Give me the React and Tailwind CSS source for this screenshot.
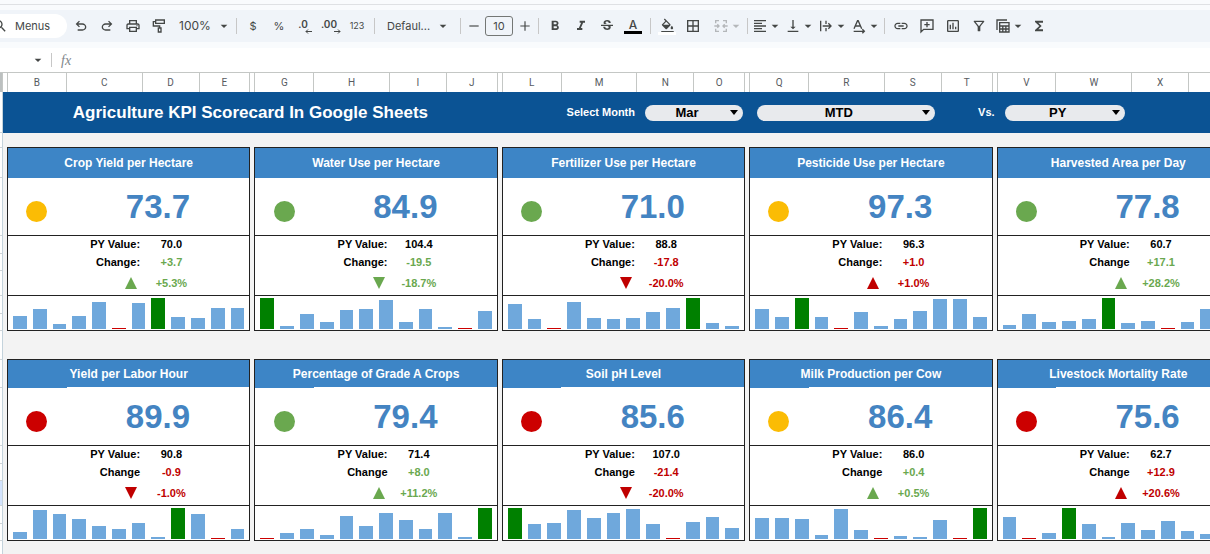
import { useState } from 'react';
import clsx from 'clsx';
import {
    MdArrowDropDown,
    MdBorderAll,
    MdFormatAlignLeft,
    MdFormatBold,
    MdFormatColorFill,
    MdFormatItalic,
    MdFunctions,
    MdLink,
    MdOutlineFilterAlt,
    MdOutlineInsertChart,
    MdOutlinePrint,
    MdSearch,
    MdStrikethroughS,
    MdVerticalAlignBottom,
} from 'react-icons/md';

const COLUMN_GROUPS = [
    ['B', 'C', 'D', 'E'],
    ['G', 'H', 'I', 'J'],
    ['L', 'M', 'N', 'O'],
    ['Q', 'R', 'S', 'T'],
    ['V', 'W', 'X'],
];

// Heights of the sheet rows, top to bottom
const ROW_HEIGHTS = [41, 15, 30, 58, 18, 17, 25, 18, 17, 29, 28, 58, 18, 17, 25, 18, 17];

// Bar heights go from 0 to 94, the lowest month is drawn as a thin red line
const TOP_CARDS = [
    { title: 'Crop Yield per Hectare', value: '73.7', status: 'yellow', py: '70.0', label: 'Change:', change: '+3.7', pct: '+5.3%', up: true, good: true, bars: [38, 60, 14, 38, 83, 0, 79, 94, 36, 33, 63, 63] },
    { title: 'Water Use per Hectare', value: '84.9', status: 'green', py: '104.4', label: 'Change:', change: '-19.5', pct: '-18.7%', up: false, good: true, bars: [94, 9, 46, 22, 59, 62, 88, 22, 61, 7, 0, 54] },
    { title: 'Fertilizer Use per Hectare', value: '71.0', status: 'green', py: '88.8', label: 'Change:', change: '-17.8', pct: '-20.0%', up: false, good: false, bars: [75, 30, 0, 83, 33, 31, 33, 51, 63, 94, 18, 9] },
    { title: 'Pesticide Use per Hectare', value: '97.3', status: 'yellow', py: '96.3', label: 'Change:', change: '+1.0', pct: '+1.0%', up: true, good: false, bars: [61, 36, 94, 36, 0, 51, 9, 29, 54, 90, 92, 36] },
    { title: 'Harvested Area per Day', value: '77.8', status: 'green', py: '60.7', label: 'Change', change: '+17.1', pct: '+28.2%', up: true, good: true, bars: [12, 45, 22, 24, 29, 94, 18, 24, 0, 22, 61, 40] },
];

const BOTTOM_CARDS = [
    { title: 'Yield per Labor Hour', value: '89.9', status: 'red', py: '90.8', label: 'Change', change: '-0.9', pct: '-1.0%', up: false, good: false, bars: [20, 88, 75, 62, 38, 29, 49, 7, 94, 75, 0, 29] },
    { title: 'Percentage of Grade A Crops', value: '79.4', status: 'green', py: '71.4', label: 'Change', change: '+8.0', pct: '+11.2%', up: true, good: true, bars: [0, 18, 29, 12, 71, 38, 80, 57, 29, 79, 7, 94] },
    { title: 'Soil pH Level', value: '85.6', status: 'red', py: '107.0', label: 'Change', change: '-21.4', pct: '-20.0%', up: false, good: false, bars: [94, 46, 49, 87, 64, 80, 92, 46, 0, 53, 67, 32] },
    { title: 'Milk Production per Cow', value: '86.4', status: 'yellow', py: '86.0', label: 'Change', change: '+0.4', pct: '+0.5%', up: true, good: true, bars: [64, 64, 60, 12, 92, 27, 0, 9, 7, 57, 0, 94] },
    { title: 'Livestock Mortality Rate', value: '75.6', status: 'red', py: '62.7', label: 'Change', change: '+12.9', pct: '+20.6%', up: true, good: false, bars: [67, 0, 18, 94, 45, 7, 49, 27, 55, 23, 15, 40] },
];

const STATUS = {
    yellow: 'bg-[#fbbc04]',
    green: 'bg-[#6aa84f]',
    red: 'bg-[#cc0000]',
};

function Icon({ d, size = 16, children }) {
    return (
        <svg width={size} height={size} viewBox="0 0 24 24" fill="currentColor" aria-hidden="true">
            {d && <path d={d} />}
            {children}
        </svg>
    );
}

function ToolButton({ label, className, children }) {
    return (
        <button
            type="button"
            aria-label={label}
            className={clsx('flex h-6 shrink-0 items-center justify-center', className || 'w-[26px]')}
        >
            {children}
        </button>
    );
}

function Caret() {
    return <MdArrowDropDown className="-mx-0.5 size-4 shrink-0" />;
}

function DropButton({ label, className, children }) {
    return (
        <button type="button" aria-label={label} className={clsx('flex h-6 w-[30px] shrink-0 items-center', className)}>
            <span className="flex w-[18px] justify-center">{children}</span>
            <Caret />
        </button>
    );
}

function Divider() {
    return (
        <span className="flex w-2 shrink-0 justify-center">
            <span className="h-4 w-px bg-[#c7c7c7]" />
        </span>
    );
}

function Decimal({ text, right }) {
    return (
        <span className="flex flex-col items-end pt-0.5">
            <span className="pr-1 text-[10px] leading-[9px] font-semibold">{text}</span>
            <svg width="7" height="5" viewBox="0 0 7 5" fill="none" stroke="currentColor" aria-hidden="true">
                {right ? <path d="M0 2.5h6M4 .5l2 2-2 2" /> : <path d="M7 2.5H1M3 .5l-2 2 2 2" />}
            </svg>
        </span>
    );
}

function Toolbar() {
    const [fontSize, setFontSize] = useState('10');

    return (
        <div className="flex h-8 items-center overflow-hidden bg-[#f0f4f9] text-[#444746]">
            <button type="button" className="mr-px flex h-6 w-[67px] shrink-0 items-center rounded-r-full bg-white">
                <MdSearch className="-ml-2 size-4 shrink-0" />
                <span className="ml-[7px] text-[11px]">Menus</span>
            </button>
            <ToolButton label="Undo">
                <Icon d="M7 19v-2h7.1q1.575 0 2.738-1T18 13.5q0-1.5-1.163-2.5T14.1 10H7.8l2.6 2.6L9 14 4 9l5-5 1.4 1.4L7.8 8h6.3q2.425 0 4.163 1.575T20 13.5q0 2.35-1.737 3.925T14.1 19H7Z" />
            </ToolButton>
            <ToolButton label="Redo">
                <Icon d="M17 19v-2H9.9q-1.575 0-2.738-1T6 13.5Q6 12 7.163 11T9.9 10h6.3l-2.6 2.6L15 14l5-5-5-5-1.4 1.4L16.2 8H9.9Q7.475 8 5.737 9.575T4 13.5q0 2.35 1.737 3.925T9.9 19H17Z" />
            </ToolButton>
            <ToolButton label="Print">
                <MdOutlinePrint className="size-4" />
            </ToolButton>
            <ToolButton label="Paint format">
                <Icon>
                    <g fill="none" stroke="currentColor" strokeWidth="2">
                        <path d="M7 3h13v5H7zM7 5.500H3.500V12H13v3" />
                        <path d="M11 15h4v6h-4z" />
                    </g>
                </Icon>
            </ToolButton>
            <button type="button" className="flex h-6 w-[60px] shrink-0 items-center justify-between pr-0.5 pl-[7px] text-[12px]">
                100%
                <Caret />
            </button>
            <Divider />
            <ToolButton label="Format as currency">
                <span className="text-[11px]">$</span>
            </ToolButton>
            <ToolButton label="Format as percent">
                <span className="text-[11px]">%</span>
            </ToolButton>
            <ToolButton label="Decrease decimal places">
                <Decimal text=".0" />
            </ToolButton>
            <ToolButton label="Increase decimal places">
                <Decimal text=".00" right />
            </ToolButton>
            <ToolButton label="More formats">
                <span className="text-[9px]">123</span>
            </ToolButton>
            <Divider />
            <button type="button" className="flex h-6 w-[78px] shrink-0 items-center justify-between pr-[7px] pl-[9px] text-[11px]">
                Defaul...
                <Caret />
            </button>
            <Divider />
            <ToolButton label="Decrease font size" className="w-[19px]">
                <Icon size={14} d="M4 11h16v2H4z" />
            </ToolButton>
            <input
                aria-label="Font size"
                value={fontSize}
                onChange={(e) => setFontSize(e.target.value)}
                className="mx-0.5 h-5 w-7 shrink-0 rounded-[3px] border border-[#747775] text-center text-[11px]"
            />
            <ToolButton label="Increase font size" className="w-[19px]">
                <Icon size={14} d="M4 11h7V4h2v7h7v2h-7v7h-2v-7H4z" />
            </ToolButton>
            <Divider />
            <ToolButton label="Bold">
                <MdFormatBold className="size-4" />
            </ToolButton>
            <ToolButton label="Italic">
                <MdFormatItalic className="size-4" />
            </ToolButton>
            <ToolButton label="Strikethrough">
                <MdStrikethroughS className="size-4" />
            </ToolButton>
            <ToolButton label="Text color">
                <span className="flex flex-col items-center">
                    <span className="text-[12px] leading-3 font-medium">A</span>
                    <span className="h-[3px] w-[18px] bg-black" />
                </span>
            </ToolButton>
            <Divider />
            <ToolButton label="Fill color">
                <span className="flex flex-col items-center">
                    <MdFormatColorFill className="size-[15px]" viewBox="0 0 24 19" />
                    <span className="h-[3px] w-[18px] bg-white" />
                </span>
            </ToolButton>
            <ToolButton label="Borders">
                <MdBorderAll className="size-4" />
            </ToolButton>
            <DropButton label="Merge cells" className="mr-px ml-1.5 text-[#b4b7ba]">
                <Icon>
                    <path
                        d="M9 4H4v4M15 4h5v4M9 20H4v-4M15 20h5v-4M2 12h7M22 12h-7M6.500 9.500 9 12l-2.500 2.500M17.500 9.500 15 12l2.500 2.500"
                        fill="none"
                        stroke="currentColor"
                        strokeWidth="2"
                    />
                </Icon>
            </DropButton>
            <Divider />
            <div className="flex gap-[3px]">
                <DropButton label="Horizontal align">
                    <MdFormatAlignLeft className="size-4" />
                </DropButton>
                <DropButton label="Vertical align">
                    <MdVerticalAlignBottom className="size-4" />
                </DropButton>
                <DropButton label="Text wrapping">
                    <Icon>
                        <path
                            d="M4 4v16M12 4v5M12 15v5M7 12h12M15.500 8l4 4-4 4"
                            fill="none"
                            stroke="currentColor"
                            strokeWidth="2"
                        />
                    </Icon>
                </DropButton>
                <DropButton label="Text rotation">
                    <Icon>
                        <path
                            d="M4.500 16 9.800 4h1L16 16M6.500 12h7.500M4 20h16M17 17l3 3-3 3"
                            fill="none"
                            stroke="currentColor"
                            strokeWidth="2"
                        />
                    </Icon>
                </DropButton>
            </div>
            <Divider />
            <ToolButton label="Insert link">
                <MdLink className="size-4" />
            </ToolButton>
            <ToolButton label="Insert comment">
                <Icon>
                    <path d="M3 21V3h18v14H7z M12 6v8 M8 10h8" fill="none" stroke="currentColor" strokeWidth="2" />
                </Icon>
            </ToolButton>
            <ToolButton label="Insert chart">
                <MdOutlineInsertChart className="size-4" />
            </ToolButton>
            <ToolButton label="Create a filter">
                <MdOutlineFilterAlt className="size-4" />
            </ToolButton>
            <DropButton label="Filter views" className="ml-0.5">
                <Icon>
                    <path
                        d="M7 7h14v14H7zM7 12h14M7 16.500h14M11.700 12v9M16.300 12v9M3 18V3h15"
                        fill="none"
                        stroke="currentColor"
                        strokeWidth="2"
                    />
                </Icon>
            </DropButton>
            <ToolButton label="Functions" className="ml-0.5 w-[26px]">
                <MdFunctions className="size-4" />
            </ToolButton>
        </div>
    );
}

function FormulaBar() {
    return (
        <div className="flex h-6 items-center bg-white text-[#444746]">
            <button type="button" aria-label="Name box" className="flex h-6 w-[51px] items-center justify-end pr-[7px]">
                <Caret />
            </button>
            <span className="h-3.5 w-px bg-[#c7c7c7]" />
            <label htmlFor="formula" className="w-7 pl-[9px] font-['Liberation_Serif',serif] text-[14px] text-[#80868b] italic">
                fx
            </label>
            <input id="formula" className="min-w-0 flex-1 outline-none" />
        </div>
    );
}

function PillSelect({ id, label, options }) {
    return (
        <div className="relative">
            <select
                id={id}
                aria-label={label}
                className="block h-4 w-full appearance-none rounded-full bg-[#e8eaed] pr-[14px] text-center text-[13px] leading-4 font-bold text-black [text-align-last:center]"
            >
                {options.map((option) => (
                    <option key={option}>{option}</option>
                ))}
            </select>
            <svg
                className="pointer-events-none absolute top-[5px] right-[5px]"
                width="8"
                height="5"
                viewBox="0 0 8 5"
                aria-hidden="true"
            >
                <path d="M0 0h8L4 5z" />
            </svg>
        </div>
    );
}

function Banner() {
    return (
        <div className="bg-[#0b5394] text-white">
            <div className="ml-1 grid h-[41px] min-w-[1233px] grid-cols-5 items-center gap-1">
                <h1 className="col-span-2 pr-1 text-center text-[17px] font-bold whitespace-nowrap">
                    Agriculture KPI Scorecard In Google Sheets
                </h1>
                <div className="grid grid-cols-[59fr_76fr_57fr_51fr] items-center">
                    <label htmlFor="month" className="col-span-2 pr-0.5 text-right text-[11px] font-bold">
                        Select Month
                    </label>
                    <div className="col-span-2 pr-0.5 pl-2">
                        <PillSelect id="month" options={['Mar', 'Apr', 'May']} />
                    </div>
                </div>
                <div className="grid grid-cols-[59fr_76fr_57fr_51fr] items-center">
                    <div className="col-span-3 pr-[7px] pl-2">
                        <PillSelect id="period" label="Period" options={['MTD', 'YTD']} />
                    </div>
                    <label htmlFor="compare" className="-mr-0.5 text-right text-[11px] font-bold">
                        Vs.
                    </label>
                </div>
                <div className="grid grid-cols-[59fr_76fr_57fr_51fr] items-center">
                    <div className="col-span-2 pr-[7px] pl-2">
                        <PillSelect id="compare" options={['PY', 'Target']} />
                    </div>
                </div>
            </div>
        </div>
    );
}

function BarStrip({ bars }) {
    return (
        <div className="flex h-[34px] items-end gap-[6px] px-[5px] pb-px">
            {bars.map((bar, i) => (
                <div key={i} className="flex h-[31px] flex-1 items-end">
                    <div
                        className={clsx('min-h-px w-full', bar === 94 ? 'bg-[#008000]' : bar === 0 ? 'bg-[#cc0000]' : 'bg-[#6fa8dc]')}
                        style={{ height: `${(bar / 94) * 100}%` }}
                    />
                </div>
            ))}
        </div>
    );
}

function KpiCard({ card, compact }) {
    const tone = card.good ? 'text-[#6aa84f]' : 'text-[#c00000]';

    return (
        <section className="border border-[#222] bg-white text-[11px] font-bold text-black">
            <h2
                className={clsx(
                    'flex items-center justify-center bg-[#3d85c6] text-[12px] text-white',
                    compact ? 'h-[27px]' : 'h-[30px]'
                )}
            >
                {card.title}
            </h2>
            <div className={clsx('grid grid-cols-[59fr_76fr_57fr_51fr] border-b border-[#222]', compact ? 'h-[59px]' : 'h-[58px]')}>
                <div className={clsx('flex items-end justify-center pr-px pb-[13px]', compact && 'border-t border-[#3d85c6]')}>
                    <span className={clsx('size-[21px] rounded-full', STATUS[card.status])} />
                </div>
                <div className="col-span-3 flex items-center justify-center text-[33px] leading-none text-[#4484c2]">
                    {card.value}
                </div>
            </div>
            <div className="grid grid-cols-[59fr_76fr_57fr_51fr] grid-rows-[17px_18px_24px] items-center border-b border-[#222]">
                <span className="col-span-2 pr-0.5 text-right">PY Value:</span>
                <span className="pl-0.5 text-center">{card.py}</span>
                <span />
                <span className="col-span-2 pr-0.5 text-right">{card.label}</span>
                <span className={clsx('pl-0.5 text-center', tone)}>{card.change}</span>
                <span />
                <span className={clsx('col-span-2 flex justify-end pr-[5px]', tone)}>
                    <svg width="12" height="12" viewBox="0 0 12 12" fill="currentColor" aria-hidden="true">
                        <path d={card.up ? 'M6 0l6 12H0z' : 'M0 0h12L6 12z'} />
                    </svg>
                </span>
                <span className={clsx('pl-0.5 text-center', tone)}>{card.pct}</span>
            </div>
            <BarStrip bars={card.bars} />
        </section>
    );
}

export default function App() {
    return (
        <div className="min-h-screen overflow-hidden bg-[#f9fbfd] font-[Inter,sans-serif]">
            <div className="mb-[5px] h-[5px] border-b border-[#dfe1e4]" />
            <Toolbar />
            <div className="h-1.5" />
            <FormulaBar />

            {/* Column letters */}
            <div className="flex h-5 border-t border-[#c4c7c5] bg-white">
                <div className="w-[3px] shrink-0 border-r border-[#c4c7c5] bg-[#bcc0c0]" />
                <div className="ml-1 grid min-w-[1233px] flex-1 grid-cols-5 gap-1">
                    {COLUMN_GROUPS.map((group) => (
                        <div
                            key={group[0]}
                            className="grid grid-cols-[59fr_76fr_57fr_51fr] border-l border-[#c4c7c5] font-[Roboto,sans-serif] text-[10px] text-[#575b5f]"
                        >
                            {group.map((letter) => (
                                <span key={letter} className="flex items-center justify-center border-r border-[#c4c7c5]">
                                    {letter}
                                </span>
                            ))}
                        </div>
                    ))}
                </div>
            </div>

            {/* Sheet */}
            <div className="flex font-['Liberation_Sans',Arial,sans-serif]">
                <div className="w-[3px] shrink-0 border-r border-[#c4d3dc] bg-white">
                    {ROW_HEIGHTS.map((height, i) => (
                        <div
                            key={i}
                            className={clsx('border-b border-[#cfd3d6]', i === 14 && 'bg-[#d3e3fd]')}
                            style={{ height }}
                        />
                    ))}
                </div>
                <main className="min-w-0 flex-1 bg-[#f3f3f3]">
                    <Banner />
                    <div className="mt-[14px] ml-1 grid min-w-[1233px] grid-cols-5 gap-x-1">
                        {TOP_CARDS.map((card) => (
                            <KpiCard key={card.title} card={card} />
                        ))}
                    </div>
                    <div className="mt-7 mb-[14px] ml-1 grid min-w-[1233px] grid-cols-5 gap-x-1">
                        {BOTTOM_CARDS.map((card) => (
                            <KpiCard key={card.title} card={card} compact />
                        ))}
                    </div>
                </main>
            </div>
        </div>
    );
}
